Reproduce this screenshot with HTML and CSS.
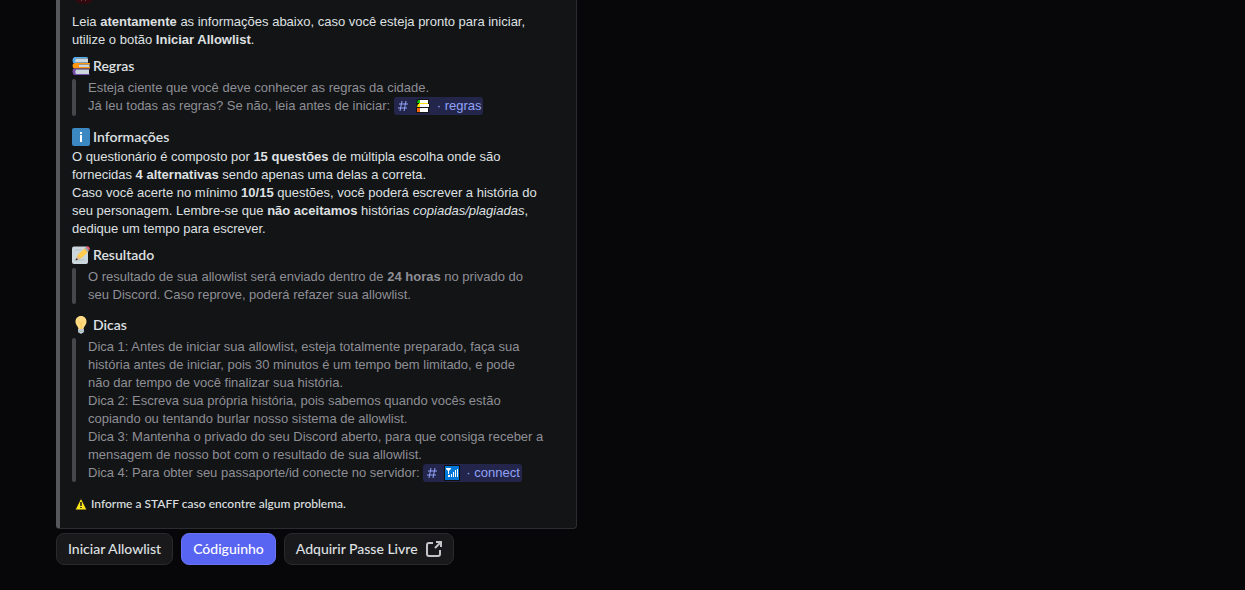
FILE: index.html
```html
<!DOCTYPE html>
<html lang="pt-BR">
<head>
<meta charset="utf-8">
<title>Allowlist</title>
<link rel="stylesheet" href="styles.css">
</head>
<body>
<main class="message">
  <article class="embed">
    <svg class="avatar" viewBox="0 0 24 5" aria-hidden="true"><circle cx="12" cy="-8" r="12" fill="#32090f"/><path d="M9 0l1 1M13 0l1 1" stroke="#6a4048" fill="none"/></svg>
    <p class="text intro">Leia <strong>atentamente</strong> as informações abaixo, caso você esteja pronto para iniciar,<br>utilize o botão <strong>Iniciar Allowlist</strong>.</p>

    <section class="field">
      <h2 class="title">
        <svg class="emoji" viewBox="0 0 36 36" aria-hidden="true"><path d="M5 0h26v3H8v8h24v2H5Q1 12 1 7 1 1 5 0z" fill="#55acee"/><path d="M8 3h24v8H8q-3-4 0-8z" fill="#ccd6dd"/><path d="M5 12h31v3H14v5h22v3H5q-4-1-4-6 0-4 4-5z" fill="#ff9612"/><path d="M14 15h21v5H14z" fill="#ccd6dd"/><path d="M5 23h30v2H8v9h27v2H5q-4-1-4-7t4-6z" fill="#744eaa"/><path d="M8 25h26v9H8q-3-4 0-9z" fill="#ccd6dd"/></svg>
        Regras</h2>
      <blockquote class="quote">Esteja ciente que você deve conhecer as regras da cidade.<br>Já leu todas as regras? Se não, leia antes de iniciar: <a class="mention" href="#regras"><svg class="hash" viewBox="0 0 14 14" aria-hidden="true"><path d="M6 2L4 12M10 2L8 12M3 5h9M2 9h9"/></svg><svg class="glyph" viewBox="0 0 16 16" aria-hidden="true"><path d="M2 1h12v5h1v4h-1v5H2l-1-1v-4l1-1-1-4z" fill="#141414"/><path d="M3 2h3v3H2z" fill="#16c60c"/><path d="M5 2h8v3H5z" fill="#fff"/><path d="M3 6h3v3H2z" fill="#fce100"/><path d="M5 6h9v3H5z" fill="#fff"/><path d="M4 5h9v1H4z" fill="#fce100"/><path d="M2 10h4v4H2z" fill="#f7630c"/><path d="M5 10h8v4H5z" fill="#fff"/></svg><span>· regras</span></a></blockquote>
    </section>

    <section class="field">
      <h2 class="title">
        <svg class="emoji" viewBox="0 0 18 18" aria-hidden="true"><rect width="18" height="18" rx="2" fill="#3b88c3"/><path d="M8 4h2v2H8zM8 7h2v7H8z" fill="#fff"/></svg>
        Informações</h2>
      <p class="text detail">O questionário é composto por <strong>15 questões</strong> de múltipla escolha onde são<br>fornecidas <strong>4 alternativas</strong> sendo apenas uma delas a correta.<br>Caso você acerte no mínimo <strong>10/15</strong> questões, você poderá escrever a história do<br>seu personagem. Lembre-se que <strong>não aceitamos</strong> histórias <em>copiadas/plagiadas</em>,<br>dedique um tempo para escrever.</p>
    </section>

    <section class="field">
      <h2 class="title">
        <svg class="emoji" viewBox="0 0 36 36" aria-hidden="true"><rect y="1" width="32" height="35" rx="4" fill="#ccd6dd"/><path d="M5 8h14M5 28h20" stroke="#b3c0ca" stroke-width="2"/><path d="M8 28l3-10L26 4l7 7-15 14z" fill="#ffcc4d"/><path d="M8 28l3-9 6 6z" fill="#e7b98a"/><path d="M7 29l2-5 3 3z" fill="#292f33"/><path d="M25 5l3-3 6 7-3 3z" fill="#99aab5"/><path d="M28 2q3-3 6 0t1 6l-1 1z" fill="#ea596e"/></svg>
        Resultado</h2>
      <blockquote class="quote">O resultado de sua allowlist será enviado dentro de <strong>24 horas</strong> no privado do<br>seu Discord. Caso reprove, poderá refazer sua allowlist.</blockquote>
    </section>

    <section class="field">
      <h2 class="title">
        <svg class="emoji" viewBox="0 0 36 36" aria-hidden="true"><path d="M18 0C11 0 7 5 7 11c0 7 5 9 6 15h10c1-6 6-8 6-15C29 5 25 0 18 0z" fill="#ffd983"/><path d="M13 11l5 4 5-4M18 15v11" fill="none" stroke="#ffcc4d" stroke-width="2"/><path d="M12 26h12v6l-3 2q-3 3-6 0l-3-2z" fill="#ccd6dd"/><path d="M12 29l12-2M12 32l12-2" stroke="#99aab5" stroke-width="1.500"/></svg>
        Dicas</h2>
      <blockquote class="quote">Dica 1: Antes de iniciar sua allowlist, esteja totalmente preparado, faça sua<br>história antes de iniciar, pois 30 minutos é um tempo bem limitado, e pode<br>não dar tempo de você finalizar sua história.<br>Dica 2: Escreva sua própria história, pois sabemos quando vocês estão<br>copiando ou tentando burlar nosso sistema de allowlist.<br>Dica 3: Mantenha o privado do seu Discord aberto, para que consiga receber a<br>mensagem de nosso bot com o resultado de sua allowlist.<br>Dica 4: Para obter seu passaporte/id conecte no servidor: <a class="mention" href="#connect"><svg class="hash" viewBox="0 0 14 14" aria-hidden="true"><path d="M6 2L4 12M10 2L8 12M3 5h9M2 9h9"/></svg><svg class="glyph" viewBox="0 0 16 16" aria-hidden="true"><path d="M0 0h16v16H0z" fill="#101010"/><path d="M1 1h14v14H1z" fill="#0078d7"/><path d="M2 3h5v1L5 6v3H4V6L2 4zM4 10h2v2H4zM7 9h1v3H7zM9 7h1v5H9zM11 5h1v7h-1zM13 4h1v8h-1z" fill="#fff"/></svg><span>· connect</span></a></blockquote>
    </section>

    <footer class="footer">
      <svg class="warning" viewBox="0 0 12 12" aria-hidden="true"><path d="M6 0l6 12H0z" fill="#ffe81a" stroke="#141414"/><path d="M6 4v4M6 9v1" stroke="#141414" stroke-width="1.500"/></svg>
      <span>Informe a STAFF caso encontre algum problema.</span>
    </footer>
  </article>

  <div class="actions">
    <button class="button" type="button">Iniciar Allowlist</button>
    <button class="button primary" type="button">Códiguinho</button>
    <button class="button link" type="button">Adquirir Passe Livre
      <svg class="external" viewBox="0 0 16 16" aria-hidden="true"><path d="M7 2H3Q1 2 1 4v9q0 2 2 2h9q2 0 2-2V9M10 1h5v5M15 1L9 7"/></svg>
    </button>
  </div>
</main>
</body>
</html>
```
FILE: styles.css
```css
* { box-sizing: border-box; }

body {
  margin: 0;
  background: #070709;
  color: #dfe0e2;
  font: 13px/18px "Liberation Sans", Arial, sans-serif;
}

.message { padding: 0 56px 24px; }

.embed {
  display: flex;
  flex-direction: column;
  max-width: 521px;
  padding: 0 12px 15px;
  background: #131416;
  border: 1px solid #2c2d30;
  border-top: 0;
  border-left: 4px solid #56575b;
  border-radius: 0 0 4px 4px;
  white-space: nowrap;
}

.avatar { width: 24px; height: 5px; }
.text, .quote, .title { margin: 0; }
.intro { margin-top: 8px; }
.detail { margin-top: 2px; }
strong { font-weight: 700; }

.field { margin-top: 12px; }
.intro + .field, .field:nth-of-type(3) { margin-top: 8px; }

.title {
  display: flex;
  align-items: center;
  gap: 3px;
  font: 600 14px/18px Lato, sans-serif;
}
.emoji { width: 18px; height: 18px; }

.quote {
  position: relative;
  margin-top: 4px;
  padding-left: 16px;
  color: #8e8f95;
}
.intro + .field .quote { padding-bottom: 1px; }
.quote::before {
  content: "";
  position: absolute;
  inset: 0 auto 0 0;
  width: 4px;
  border-radius: 4px;
  background: #46474b;
}

.mention {
  display: inline-flex;
  align-items: center;
  height: 18px;
  padding: 0 2px;
  border-radius: 3px;
  background: #23264a;
  color: #92a2f8;
  text-decoration: none;
  vertical-align: top;
}
.hash {
  width: 14px;
  height: 14px;
  margin-right: 5px;
  fill: none;
  stroke: currentColor;
}
.glyph { width: 16px; height: 16px; margin-right: 6px; }

.footer {
  display: flex;
  align-items: center;
  gap: 4px;
  margin-top: 13px;
  padding-left: 3px;
  font: 500 12px/18px Lato, sans-serif;
}
.warning { width: 12px; height: 12px; }

.actions { display: flex; flex-wrap: wrap; gap: 8px; margin-top: 4px; }

.button {
  display: flex;
  align-items: center;
  gap: 8px;
  height: 32px;
  padding: 0 11px;
  border: 1px solid #2a2a2d;
  border-radius: 8px;
  background: #19191c;
  color: #dfe0e2;
  font: 500 14px/18px Lato, sans-serif;
}
.primary { background: #5865f2; border-color: #6974f3; color: #fff; }
.external {
  width: 16px;
  height: 16px;
  fill: none;
  stroke: #c4c5c9;
  stroke-width: 2;
}
```
